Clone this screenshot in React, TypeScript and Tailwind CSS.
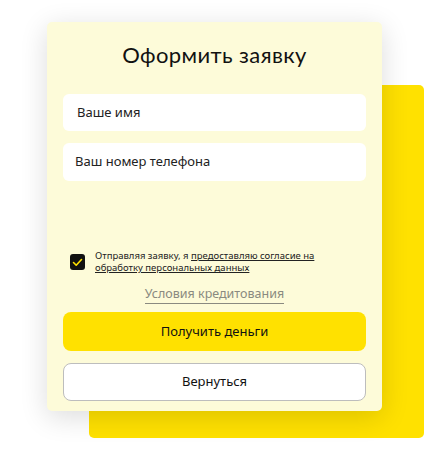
import React from 'react';

const App: React.FC = () => {
  return (
    <div className="relative w-[424px] h-[472px] bg-white overflow-hidden" style={{ fontFamily: 'Lato, "Noto Sans", sans-serif' }}>
      <div className="absolute left-[89px] top-[85px] w-[335px] h-[353px] rounded-[5px] bg-[#ffe100]" />
      <div className="absolute left-[47px] top-[22px] w-[335px] h-[389px] rounded-[5px] bg-[#fdfbd9] shadow-[0_6px_28px_rgba(0,0,0,0.14)] px-4 flex flex-col">
        <h1 className="mt-[18px] text-center text-[22px] leading-[30px] tracking-[0.4px] text-[#111]">
          Оформить заявку
        </h1>
        <div className="mt-[24px] flex flex-col gap-[12px]">
          <div className="h-[37px] rounded-[6px] bg-white flex items-center px-[14px] text-[13px] text-[#222]" style={{ fontFamily: '"Noto Sans", sans-serif' }}>
            Ваше имя
          </div>
          <div className="h-[38px] rounded-[6px] bg-white flex items-center px-[12px] text-[13px] text-[#222]" style={{ fontFamily: '"Noto Sans", sans-serif' }}>
            Ваш номер телефона
          </div>
        </div>
        <div className="mt-[69px] flex items-start gap-[10px] pl-[7px]">
          <div className="mt-[4px] w-[15px] h-[16px] rounded-[3px] bg-[#111] flex items-center justify-center shrink-0">
            <svg width="11" height="9" viewBox="0 0 11 9" fill="none">
              <path d="M1.5 4.5L4.2 7.2L9.5 1.5" stroke="#ffe100" strokeWidth="1.6" strokeLinecap="round" strokeLinejoin="round" />
            </svg>
          </div>
          <p className="text-[9.5px] leading-[12px] text-[#222]" style={{ fontFamily: '"Noto Sans", sans-serif' }}>
            Отправляя заявку, я <span className="underline">предоставляю согласие на</span>
            <br />
            <span className="underline">обработку персональных данных</span>
          </p>
        </div>
        <div className="mt-[12px] flex justify-center">
          <span className="text-[12.5px] leading-[16px] text-[#8a8a80] border-b border-[#8a8a80] pb-[1px]" style={{ fontFamily: '"Noto Sans", sans-serif' }}>
            Условия кредитования
          </span>
        </div>
        <button className="mt-[8px] h-[39px] rounded-[8px] bg-[#ffe100] text-[13px] text-[#111]" style={{ fontFamily: '"Noto Sans", sans-serif' }}>
          Получить деньги
        </button>
        <button className="mt-[12px] h-[38px] rounded-[8px] bg-white border border-[#bdbdbd] text-[13px] text-[#111]" style={{ fontFamily: '"Noto Sans", sans-serif' }}>
          Вернуться
        </button>
      </div>
    </div>
  );
};

export default App;
